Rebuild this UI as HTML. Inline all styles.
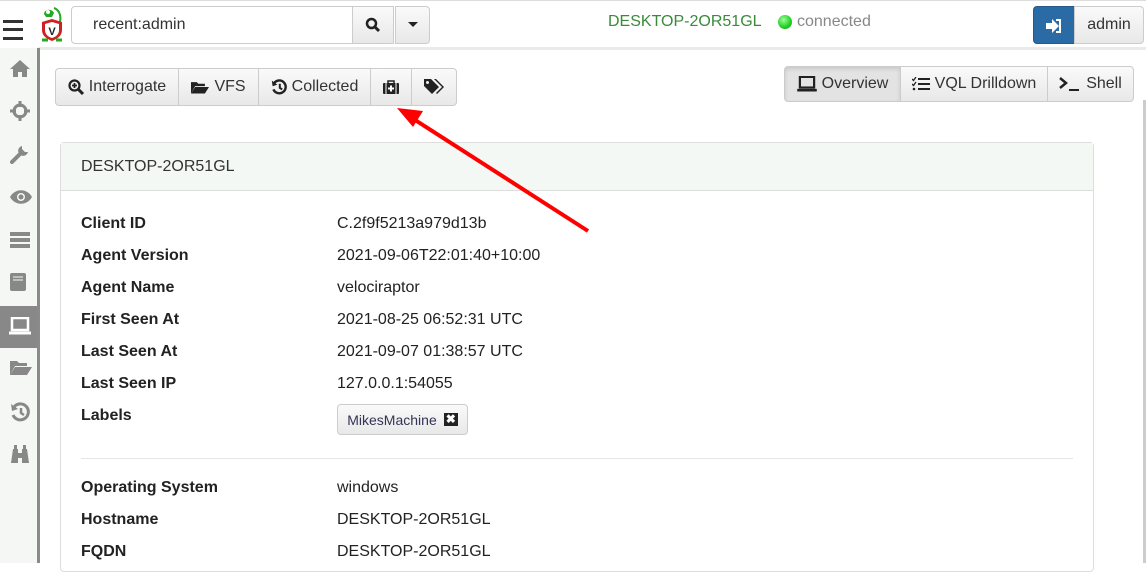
<!DOCTYPE html>
<html><head><style>
*{box-sizing:border-box;margin:0;padding:0}
body{width:1146px;height:563px;overflow:hidden;background:#fff;font-family:"Liberation Sans",sans-serif;font-size:16px;color:#222;position:relative}
.abs{position:absolute}
.btn{position:absolute;border:1px solid #ccc;background:linear-gradient(#fafafa,#e8e8e8);display:flex;align-items:center;justify-content:center;gap:5px;color:#333}
.side svg{position:absolute;left:10px}
.row{position:absolute;left:81px;font-weight:bold}
.val{position:absolute;left:337px}
</style></head><body>
<div class="abs" style="left:0;top:0;width:1146px;height:1px;background:#ddd"></div>
<div class="abs" style="left:3px;top:20px;width:20px;height:3px;background:#333"></div>
<div class="abs" style="left:3px;top:28px;width:20px;height:3px;background:#333"></div>
<div class="abs" style="left:3px;top:37px;width:20px;height:3px;background:#333"></div>
<svg class="abs" style="left:38px;top:6px" width="28" height="38" viewBox="0 0 28 38"><path d="M6 8c0-5 8-6 10-1l-2 4-6 0z" fill="#2a2"/><circle cx="10" cy="6" r="2" fill="#fff"/><path d="M16 2c6 2 8 10 5 16" stroke="#2a2" stroke-width="2" fill="none"/><path d="M4 16l10-3 10 3v8c0 6-5 9-10 11-5-2-10-5-10-11z" fill="#c22"/><path d="M7 18l7-2 7 2v6c0 4-3 7-7 8-4-1-7-4-7-8z" fill="#fff"/><text x="14" y="29" font-size="11" font-weight="bold" text-anchor="middle" fill="#222" font-family="Liberation Sans">V</text><path d="M4 34h6M18 34h6" stroke="#2a2" stroke-width="3"/></svg>
<div class="abs" style="left:71px;top:6px;width:282px;height:38px;border:1px solid #ccc;border-radius:4px 0 0 4px;padding:9px 0 0 21px;font-size:16px;color:#333">recent:admin</div>
<div class="btn" style="left:352px;top:6px;width:42px;height:38px"><svg width="16" height="16" viewBox="0 0 16 16"><circle cx="6.5" cy="6.5" r="4.5" stroke="#222" stroke-width="2.5" fill="none"/><path d="M10 10l4 4" stroke="#222" stroke-width="3"/></svg></div>
<div class="btn" style="left:395px;top:6px;width:35px;height:38px;border-radius:0 4px 4px 0"><svg width="10" height="6"><path d="M0 0h10L5 5z" fill="#222"/></svg></div>
<div class="abs" style="left:608px;top:13px;color:#3a8a3a;font-size:16px">DESKTOP-2OR51GL</div>
<div class="abs" style="left:778px;top:15px;width:14px;height:14px;border-radius:50%;background:radial-gradient(circle at 40% 35%,#9f9,#2c2 60%,#191);"></div>
<div class="abs" style="left:797px;top:13px;color:#888;font-size:16px">connected</div>
<div class="abs" style="left:1033px;top:6px;width:42px;height:38px;background:#2a6aa5;border-radius:4px 0 0 4px;border:1px solid #24598a"><svg style="position:absolute;left:12px;top:12px" width="16" height="14" viewBox="0 0 16 14"><path d="M0 4h6V0l7 7-7 7v-4H0z" fill="#fff"/><path d="M10 1h4v12h-4" stroke="#fff" stroke-width="2" fill="none"/></svg></div>
<div class="btn" style="left:1074px;top:6px;width:70px;height:38px;border-radius:0 4px 4px 0">admin</div>
<div class="abs" style="left:38px;top:47px;width:1108px;height:3px;background:#e8ece8"></div>
<div class="abs side" style="left:0;top:48px;width:37px;height:515px;background:#f4f7f4">
<svg style="top:11px" width="20" height="18" viewBox="0 0 20 18"><path d="M10 1L0 10h3v8h5v-5h4v5h5v-8h3z" fill="#888"/></svg>
<svg style="top:53px" width="20" height="20" viewBox="0 0 20 20"><circle cx="10" cy="10" r="6" stroke="#888" stroke-width="3" fill="none"/><path d="M10 0v6M10 14v6M0 10h6M14 10h6" stroke="#888" stroke-width="3"/></svg>
<svg style="top:96px" width="20" height="20" viewBox="0 0 20 20"><path d="M2 18l9-9" stroke="#888" stroke-width="4" stroke-linecap="round"/><path d="M12 2a5 5 0 1 0 6 6l-3 0-3-3z" fill="#888"/></svg>
<svg style="top:142px" width="22" height="14" viewBox="0 0 22 14"><path d="M0 7c5-9 17-9 22 0-5 9-17 9-22 0z" fill="#888"/><circle cx="11" cy="7" r="4" fill="#f4f7f4"/><circle cx="11" cy="7" r="2.5" fill="#888"/></svg>
<svg style="top:184px" width="20" height="16" viewBox="0 0 20 16"><rect y="0" width="20" height="4" fill="#888"/><rect y="6" width="20" height="4" fill="#888"/><rect y="12" width="20" height="4" fill="#888"/></svg>
<svg style="top:225px" width="16" height="18" viewBox="0 0 16 18"><rect x="0" y="0" width="16" height="18" rx="2" fill="#888"/><path d="M3 4h10M3 7h10" stroke="#f4f7f4" stroke-width="1"/></svg>
</div>
<div class="abs" style="left:0;top:306px;width:37px;height:42px;background:#888"><svg style="position:absolute;left:9px;top:11px" width="22" height="18" viewBox="0 0 22 18"><rect x="3" y="1" width="16" height="12" stroke="#fff" stroke-width="2.5" fill="none"/><path d="M0 16h22" stroke="#fff" stroke-width="3"/></svg></div>
<div class="abs side" style="left:0;top:348px;width:37px">
<svg style="top:11px" width="22" height="16" viewBox="0 0 22 16"><path d="M0 2h7l2 2h8v3H5L0 16z" fill="#888"/><path d="M5 8h17l-5 8H0z" fill="#888"/></svg>
<svg style="top:54px" width="20" height="20" viewBox="0 0 20 20"><path d="M4 5a8 8 0 1 1-1 8" stroke="#888" stroke-width="3" fill="none"/><path d="M1 2l1 7 6-2z" fill="#888"/><path d="M11 6v5l3 2" stroke="#888" stroke-width="2.5" fill="none"/></svg>
<svg style="top:97px" width="20" height="18" viewBox="0 0 20 18"><path d="M1 18l2-14h5v14zM12 18V4h5l2 14zM4 0h3v4H4zM13 0h3v4h-3zM8 8h4v5H8z" fill="#888"/></svg>
</div>
<div class="abs" style="left:37px;top:48px;width:3px;height:515px;background:#8a8a8a"></div>
<div class="btn" style="left:55px;top:68px;width:124px;height:38px;border-radius:4px 0 0 4px"><svg width="16" height="16" viewBox="0 0 16 16"><circle cx="6.5" cy="6.5" r="5" stroke="#222" stroke-width="2.2" fill="none"/><path d="M10 10l5 5" stroke="#222" stroke-width="3"/><path d="M6.5 4v5M4 6.5h5" stroke="#222" stroke-width="1.8"/></svg>Interrogate</div>
<div class="btn" style="left:178px;top:68px;width:81px;height:38px"><svg width="18" height="14" viewBox="0 0 22 16"><path d="M0 2h7l2 2h8v3H5L0 16z" fill="#222"/><path d="M5 8h17l-5 8H0z" fill="#222"/></svg>VFS</div>
<div class="btn" style="left:258px;top:68px;width:113px;height:38px"><svg width="16" height="16" viewBox="0 0 20 20"><path d="M4 5a8 8 0 1 1-1 8" stroke="#222" stroke-width="3" fill="none"/><path d="M1 2l1 7 6-2z" fill="#222"/><path d="M11 6v5l3 2" stroke="#222" stroke-width="2.5" fill="none"/></svg>Collected</div>
<div class="btn" style="left:370px;top:68px;width:42px;height:38px"><svg width="16" height="14" viewBox="0 0 16 14"><path d="M5 3V1h6v2" stroke="#222" stroke-width="1.5" fill="none"/><rect x="0" y="3" width="16" height="11" rx="1" fill="#222"/><path d="M8 5.5v6M5 8.5h6" stroke="#fff" stroke-width="2"/><path d="M3 3v11M13 3v11" stroke="#fff" stroke-width="1"/></svg></div>
<div class="btn" style="left:411px;top:68px;width:46px;height:38px;border-radius:0 4px 4px 0"><svg width="20" height="16" viewBox="0 0 20 16"><path d="M0 0h7l8 8-7 7-8-8z" fill="#222"/><circle cx="3.5" cy="3.5" r="1.5" fill="#eee"/><path d="M10 0h2l8 8-7 7-1-1 6-6z" fill="#222"/></svg></div>
<div class="btn" style="left:784px;top:66px;width:117px;height:36px;border-radius:4px 0 0 4px;background:#e3e3e3;box-shadow:inset 0 2px 4px rgba(0,0,0,.12)"><svg width="20" height="16" viewBox="0 0 22 18"><rect x="3" y="1" width="16" height="12" stroke="#222" stroke-width="2.5" fill="none"/><path d="M0 16h22" stroke="#222" stroke-width="3"/></svg>Overview</div>
<div class="btn" style="left:900px;top:66px;width:148px;height:36px"><svg width="18" height="14" viewBox="0 0 18 14"><path d="M0 2l1.5 1.5L4 0M0 7l1.5 1.5L4 5" stroke="#222" stroke-width="1.3" fill="none"/><circle cx="2" cy="12" r="1.3" fill="#222"/><path d="M6 2h12M6 7h12M6 12h12" stroke="#222" stroke-width="2"/></svg>VQL Drilldown</div>
<div class="btn" style="left:1047px;top:66px;width:87px;height:36px;border-radius:0 4px 4px 0"><svg width="22" height="14" viewBox="0 0 22 14"><path d="M1 1l6 5-6 5" stroke="#222" stroke-width="2.5" fill="none"/><path d="M10 13h10" stroke="#222" stroke-width="2"/></svg>Shell</div>
<div class="abs" style="left:1143px;top:100px;width:3px;height:463px;background:#ccc"></div>
<div class="abs" style="left:60px;top:142px;width:1034px;height:430px;border:1px solid #ddd;border-radius:4px">
<div style="height:48px;background:#f4f8f4;border-bottom:1px solid #ddd;padding:15px 0 0 20px;font-size:16px;color:#333">DESKTOP-2OR51GL</div>
</div>
<div class="row" style="top:215px">Client ID</div><div class="val" style="top:215px">C.2f9f5213a979d13b</div>
<div class="row" style="top:247px">Agent Version</div><div class="val" style="top:247px">2021-09-06T22:01:40+10:00</div>
<div class="row" style="top:279px">Agent Name</div><div class="val" style="top:279px">velociraptor</div>
<div class="row" style="top:311px">First Seen At</div><div class="val" style="top:311px">2021-08-25 06:52:31 UTC</div>
<div class="row" style="top:343px">Last Seen At</div><div class="val" style="top:343px">2021-09-07 01:38:57 UTC</div>
<div class="row" style="top:375px">Last Seen IP</div><div class="val" style="top:375px">127.0.0.1:54055</div>
<div class="row" style="top:407px">Labels</div>
<div class="btn" style="left:337px;top:404px;width:131px;height:31px;border-radius:4px;font-size:14px;gap:7px;color:#335">MikesMachine<span style="display:inline-block;width:14px;height:13px;background:#222;color:#fff;font-size:12px;line-height:13px;text-align:center;font-weight:bold">✖</span></div>
<div class="abs" style="left:81px;top:458px;width:992px;height:1px;background:#e5e5e5"></div>
<div class="row" style="top:479px">Operating System</div><div class="val" style="top:479px">windows</div>
<div class="row" style="top:511px">Hostname</div><div class="val" style="top:511px">DESKTOP-2OR51GL</div>
<div class="row" style="top:543px">FQDN</div><div class="val" style="top:543px">DESKTOP-2OR51GL</div>
<svg class="abs" style="left:0;top:0" width="1146" height="563"><path d="M588 231L412 118" stroke="#f00" stroke-width="4"/><path d="M397 108l26 3-10 16z" fill="#f00"/></svg>
</body></html>
